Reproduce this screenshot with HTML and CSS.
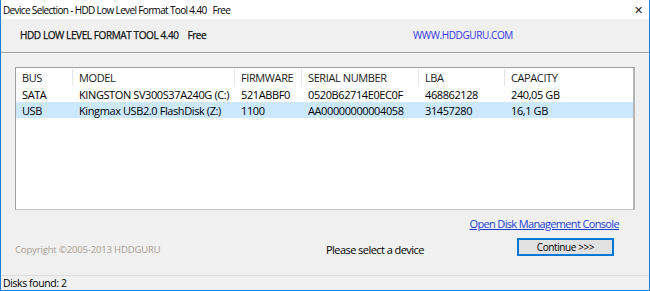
FILE: index.html
```html
<!DOCTYPE html>
<html>
<head>
<meta charset="utf-8">
<link rel="stylesheet" href="styles.css">
</head>
<body>
<div class="window">
  <div class="titlebar">
    <span class="title">Device Selection - HDD Low Level Format Tool 4.40&nbsp;&nbsp;&nbsp;Free</span>
    <span class="close">&#x2715;</span>
  </div>
  <div class="header">
    <span class="appname">HDD LOW LEVEL FORMAT TOOL 4.40&nbsp;&nbsp;&nbsp;&nbsp;Free</span>
    <span class="site">WWW.HDDGURU.COM</span>
  </div>
  <div class="content">
    <div class="listbox">
      <div class="row head">
        <div class="c c1">BUS</div>
        <div class="c c2">MODEL</div>
        <div class="c c3">FIRMWARE</div>
        <div class="c c4">SERIAL NUMBER</div>
        <div class="c c5">LBA</div>
        <div class="c c6">CAPACITY</div>
      </div>
      <div class="row">
        <div class="c c1">SATA</div>
        <div class="c c2">KINGSTON SV300S37A240G (C:)</div>
        <div class="c c3">521ABBF0</div>
        <div class="c c4">0520B62714E0EC0F</div>
        <div class="c c5">468862128</div>
        <div class="c c6">240,05 GB</div>
      </div>
      <div class="row selected">
        <div class="c c1">USB</div>
        <div class="c c2">Kingmax USB2.0 FlashDisk (Z:)</div>
        <div class="c c3">1100</div>
        <div class="c c4">AA00000000004058</div>
        <div class="c c5">31457280</div>
        <div class="c c6">16,1 GB</div>
      </div>
    </div>
    <div class="linkrow"><a class="link">Open Disk Management Console</a></div>
    <div class="actionrow">
      <span class="copyright">Copyright ©2005-2013 HDDGURU</span>
      <span class="message">Please select a device</span>
      <button class="continue">Continue &gt;&gt;&gt;</button>
    </div>
  </div>
  <div class="statusbar">Disks found: 2</div>
</div>
</body>
</html>
```

FILE: styles.css
```css
* { box-sizing: border-box; }
html, body { margin: 0; padding: 0; background: #f0f0f0; }
body { font-family: "Open Sans", "Noto Sans", sans-serif; font-size: 11px; letter-spacing: -0.4px; color: #000; }

.window {
  width: 650px;
  height: 291px;
  display: flex;
  flex-direction: column;
  border-left: 1px solid #1c7ed6;
  border-right: 1px solid #1c7ed6;
  border-bottom: 1px solid #1c7ed6;
  background: #f0f0f0;
}

.titlebar {
  height: 19px;
  background: #fff;
  display: flex;
  align-items: center;
  padding-left: 2px;
  padding-right: 6px;
}
.title { flex: 1; color: #000; font-size: 10px; letter-spacing: -0.65px; }
.close { color: #222; letter-spacing: 0; }

.header {
  height: 34px;
  display: flex;
  align-items: center;
  border-bottom: 1px solid #a0a0a0;
  box-shadow: 0 1px 0 #fff;
  padding-left: 19px;
  padding-bottom: 2px;
}
.appname { width: 393px; color: #111; font-size: 10px; letter-spacing: -0.4px; -webkit-text-stroke: 0.25px #111; }
.site { font-size: 10px; color: #3333ee; letter-spacing: -0.4px; }

.content {
  flex: 1;
  padding: 14px 14px 0 14px;
  display: flex;
  flex-direction: column;
}

.listbox {
  height: 143px;
  background: #fff;
  border-top: 1px solid #a0a0a0;
  border-left: 1px solid #a0a0a0;
  border-bottom: 1px solid #c8c8c8;
  border-right: 2px solid #b4b4b4;
  padding-top: 1px;
}
.row { display: flex; height: 16px; align-items: center; }
.row.head { height: 17px; }
.row.selected { background: #cce8ff; }
.c { padding-left: 6px; white-space: nowrap; overflow: hidden; height: 100%; display: flex; align-items: center; }
.head .c { border-right: 1px solid #e5e5e5; color: #1a1a1a; }
.head .c6 { border-right: none; }
.c1 { width: 57px; }
.c2 { width: 162px; }
.c3 { width: 67px; }
.c4 { width: 117px; }
.c5 { width: 86px; }
.c6 { flex: 1; }

.linkrow {
  display: flex;
  justify-content: flex-end;
  padding-right: 16px;
  margin-top: 5px;
  height: 16px;
  align-items: center;
}
.link { color: #1a3fd0; text-decoration: underline; letter-spacing: -0.65px; }

.actionrow {
  display: flex;
  align-items: flex-start;
  margin-top: 7px;
  height: 33px;
}
.copyright { width: 311px; color: #a89c90; margin-top: 5px; font-size: 9.5px; letter-spacing: -0.15px; }
.message { color: #000; margin-top: 4px; letter-spacing: -0.55px; }
.continue {
  margin-left: auto;
  margin-right: 21px;
  width: 97px;
  height: 18px;
  background: #e1e1e1;
  border: 1px solid #0078d7;
  box-shadow: inset 0 0 0 1px #0078d7;
  font-family: "Open Sans", "Noto Sans", sans-serif;
  font-size: 10px;
  letter-spacing: -0.4px;
  color: #000;
  padding: 0;
  line-height: 14px;
}

.statusbar {
  height: 15px;
  border-top: 1px solid #dcdcdc;
  padding-left: 2px;
  display: flex;
  align-items: center;
  font-size: 10.5px;
  letter-spacing: -0.4px;
}
```
